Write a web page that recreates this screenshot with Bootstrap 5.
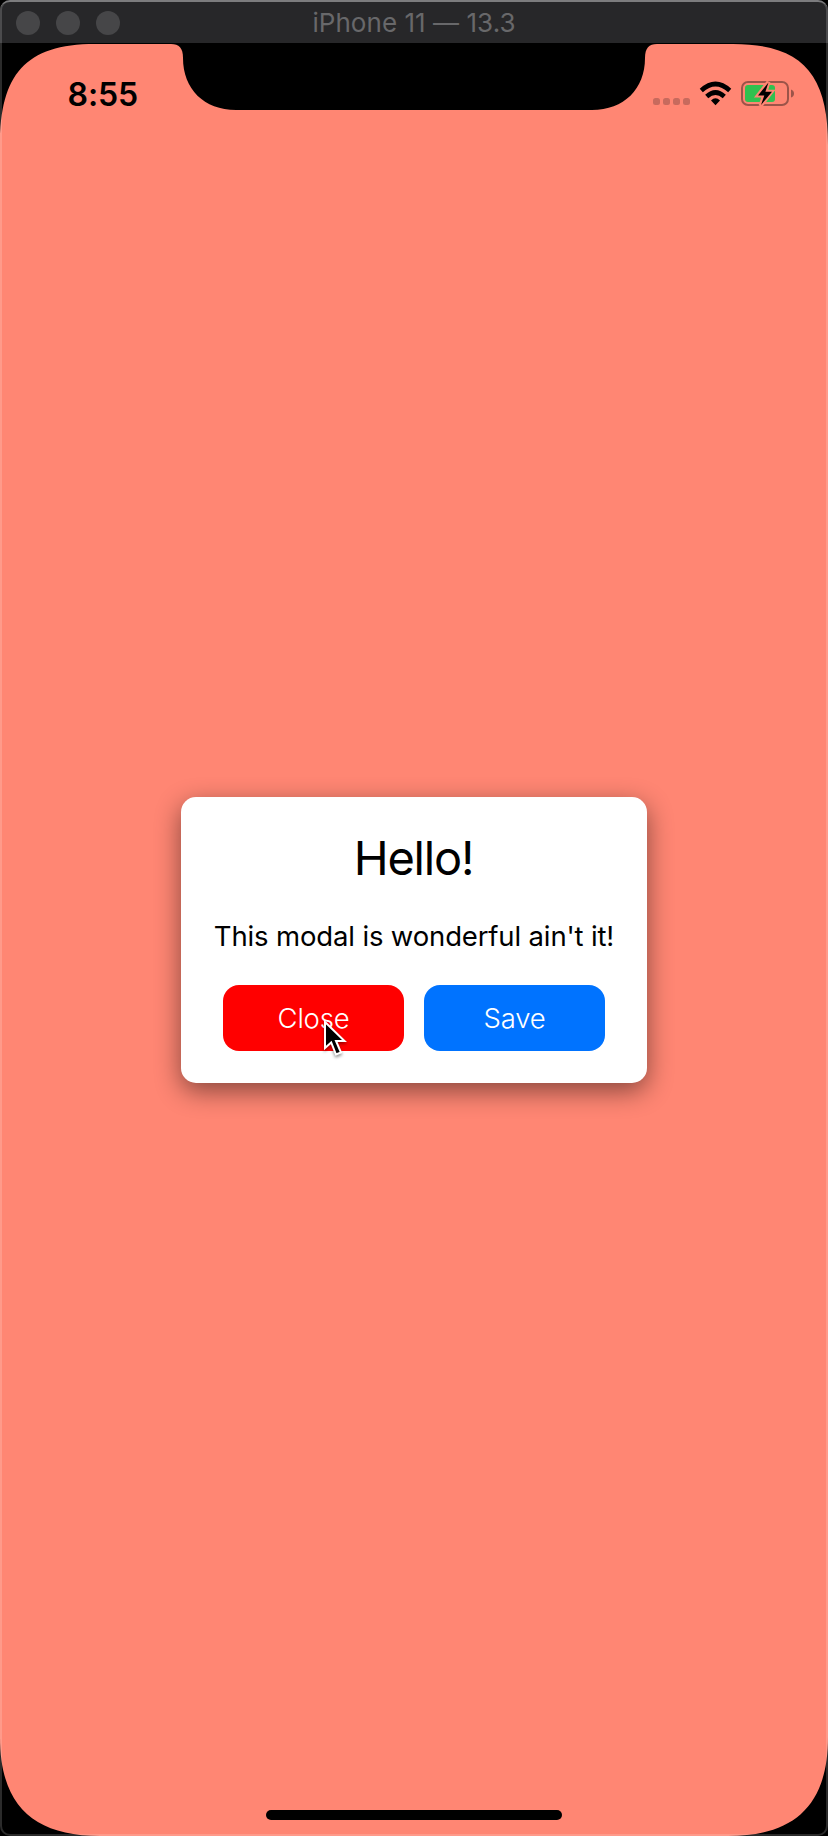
<!DOCTYPE html>
<html lang="en">
<head>
<meta charset="utf-8">
<title>iPhone 11 — 13.3</title>
<meta name="viewport" content="width=device-width, initial-scale=1">
<link href="https://cdn.jsdelivr.net/npm/bootstrap@5.3.0/dist/css/bootstrap.min.css" rel="stylesheet">
<style>
body{background:#000;font-family:Inter,"Liberation Sans",sans-serif;color:#000}
.sim{width:828px;height:1836px;background:#000}
.titlebar{height:43px;background:#272729;border-top:2px solid #626264;border-radius:10px 10px 0 0;padding-left:16px;z-index:2}
.dot{width:24px;height:24px;border-radius:50%;background:#464648}
.wtitle{color:#68686a;font-size:26px;line-height:42px;letter-spacing:.05px}
.frame{border:2px solid rgba(255,255,255,.17);border-radius:10px;pointer-events:none;z-index:3}
.screen{height:1793px}
.clock{font-size:32px;font-weight:600;line-height:40px;letter-spacing:-.1px}
.statusbar{height:67px;padding:32px 32px 0 67.500px}
.signals{margin-top:4px}
.dialog{width:466px;height:286px;border-radius:15px;box-shadow:0 8px 26px rgba(0,0,0,.47);margin-top:687px;padding-top:32px}
.dialog h1{font-size:47px;font-weight:400;line-height:58px;letter-spacing:-1.2px;padding-right:1px}
.dialog p{font-size:27.500px;line-height:34px;margin-top:32px;letter-spacing:-.15px}
.act{width:181px;height:66px;border-radius:16px;border:0;color:#fff;font-size:27.500px;font-weight:300;padding:2px 0 0;letter-spacing:-.2px}
.act:hover{color:#fff}
.act-close,.act-close:hover{background:red}
.act-save,.act-save:hover{background:#0073ff}
.acts{margin-top:32px;gap:20px}
.pointer{left:100px;top:35px;z-index:4}
.home{width:296px;height:10px;border-radius:5px;background:#000;margin-bottom:16px}
</style>
</head>
<body>
<div class="sim position-relative overflow-hidden">
  <header class="titlebar position-relative d-flex align-items-center">
    <div class="d-flex gap-3"><span class="dot"></span><span class="dot"></span><span class="dot"></span></div>
    <div class="wtitle position-absolute start-0 end-0 text-center">iPhone 11 — 13.3</div>
  </header>
  <main class="screen position-relative d-flex flex-column align-items-center">
    <svg class="position-absolute top-0 start-0" width="828" height="1793" viewBox="0 43 828 1793">
      <path fill="#ff8673" d="M0 145C0 75 25 44 95 44H171C179 44 183 48 183 58C183 89 204 110 236 110H592C624 110 645 89 645 58C645 48 649 44 657 44H733C803 44 828 75 828 145V1737C828 1806 794 1836 728 1836H100C34 1836 0 1806 0 1737Z"/>
    </svg>
    <div class="statusbar position-relative w-100 d-flex justify-content-between">
      <div class="clock">8:55</div>
      <svg class="signals" width="144" height="28" viewBox="652 79 144 28">
        <g fill="#c76a5d"><rect x="653" y="98" width="7" height="7" rx="2.5"/><rect x="663" y="98" width="7" height="7" rx="2.5"/><rect x="673" y="98" width="7" height="7" rx="2.5"/><rect x="683" y="98" width="7" height="7" rx="2.5"/></g>
        <path d="M715.5 105.200L711 100.500Q715.500 96.200 720 100.500Z"/>
        <g fill="none" stroke="#000" stroke-width="4.600"><path d="M701.300 90.500Q715.500 77.500 729.700 90.500"/><path d="M706.700 96.500Q715.500 88.500 724.300 96.500"/></g>
        <rect x="742" y="82" width="46" height="23" rx="6" fill="none" stroke="#9c5449" stroke-width="2"/>
        <path fill="#9c5449" d="M791 89.500Q794 90.500 794 93.500Q794 96.500 791 97.500Z"/>
        <rect x="745" y="85" width="30" height="17" rx="3" fill="#31c14f"/>
        <path d="M768.500 82L758 95.500H764L760.500 106L771.500 91.800H765.500Z" stroke="#ff8673" stroke-width="4"/>
        <path d="M768.500 82.500L758 95.500H764.300L761 105L772 91.800H765.400Z"/>
      </svg>
    </div>
    <section class="dialog bg-white position-relative text-center">
      <h1 class="mb-0">Hello!</h1>
      <p class="mb-0">This modal is wonderful ain't it!</p>
      <div class="acts d-flex justify-content-center">
        <div class="position-relative">
          <button class="btn act act-close">Close</button>
          <svg class="pointer position-absolute" width="24" height="40" viewBox="0 0 24 40" style="filter:drop-shadow(0 2px 1.500px rgba(0,0,0,.4))">
            <path d="M2 2V28L8.200 22.500L13 34.500L18 32.500L13 21H21.500Z" stroke="#fff" stroke-width="2"/>
          </svg>
        </div>
        <button class="btn act act-save">Save</button>
      </div>
    </section>
    <div class="home position-relative mt-auto"></div>
  </main>
  <div class="frame position-absolute top-0 start-0 w-100 h-100"></div>
</div>
<script src="https://cdn.jsdelivr.net/npm/bootstrap@5.3.0/dist/js/bootstrap.bundle.min.js"></script>
</body>
</html>
